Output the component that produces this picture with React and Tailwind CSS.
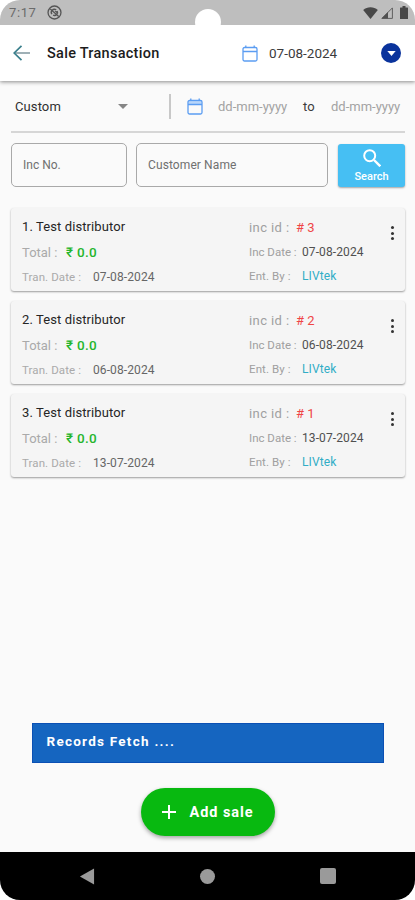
import { useState } from "react";

const sales = [
  { id: 3, name: "Test distributor", total: "0.0", tranDate: "07-08-2024", incDate: "07-08-2024", by: "LIVtek" },
  { id: 2, name: "Test distributor", total: "0.0", tranDate: "06-08-2024", incDate: "06-08-2024", by: "LIVtek" },
  { id: 1, name: "Test distributor", total: "0.0", tranDate: "13-07-2024", incDate: "13-07-2024", by: "LIVtek" },
];

function CalendarIcon({ className, band = "none" }) {
  return (
    <svg viewBox="0 0 16 17" className={className} fill="none" stroke="#5b9df2">
      <path d="M1.500 3.300h13v3.200h-13z" fill={band} stroke="none" />
      <rect x="1" y="2.500" width="14" height="13.500" rx="1.500" strokeWidth="1.300" />
      <path d="M1 6.500h14M3.800 0.500v2M12.200 0.500v2" strokeWidth="1.300" />
    </svg>
  );
}

function StatusBar() {
  return (
    <div className="relative z-10 flex h-[25px] shrink-0 items-center bg-[#bebebe] pl-[9px] pr-[7px]">
      <span className="w-[38px] text-[13px] tracking-[0.6px] text-[#6b6b6b]">7:17</span>
      <svg viewBox="0 0 16 16" className="h-[15px] w-[15px]" fill="none" stroke="#555">
        <circle cx="8" cy="8" r="6.900" strokeWidth="1.400" />
        <path d="M5.200 9.800A3.300 3.300 0 0 1 9.800 5.200M10.900 6.500A3.300 3.300 0 0 1 6.500 10.900" strokeWidth="1.500" />
        <path d="M3.500 4.200l9 8" strokeWidth="1.300" />
        <path d="M8 6.500h2.500v2.500z" fill="#555" stroke="none" />
      </svg>
      <div className="ml-auto flex items-center">
        <svg viewBox="0 0 15 12" className="h-3 w-[15px]" fill="#484848">
          <path d="M7.500 12 0.200 2.900C2.200 1.200 4.700.200 7.500.200s5.300 1 7.300 2.700z" />
        </svg>
        <svg viewBox="0 0 12 12" className="ml-[3px] h-3 w-3">
          <path d="M11.400.900v10.500H.900z" fill="none" stroke="#606060" />
          <path d="M7 5v6.500H.500z" fill="#505050" />
        </svg>
        <svg viewBox="0 0 8 13" className="ml-[7px] h-[13px] w-2" fill="#484848">
          <path d="M2.500 0h3v1.400H7.500q.500 0 .500.500V12.500q0 .500-.500.500h-7q-.500 0-.500-.500V1.900q0-.500.500-.500h2z" />
        </svg>
      </div>
      {/* camera cutout */}
      <div className="absolute left-[195px] top-[9px] h-[26px] w-[26px] rounded-full bg-white" />
    </div>
  );
}

function Header() {
  return (
    <header className="relative flex h-14 shrink-0 items-center bg-white pl-[13px] pr-[14px] shadow-[0_1px_4px_rgba(0,0,0,0.45)]">
      <svg viewBox="0 0 17 16" className="h-4 w-[17px]" fill="none" strokeWidth="1.700">
        <path d="M2 8h15" stroke="#7f969e" />
        <path d="M8.500.800 1.200 8l7.300 7.200" stroke="#3a7f8c" />
      </svg>
      <h1 className="ml-[17px] w-[195px] pt-[2px] text-[14.5px] font-medium tracking-[0.28px] text-[#1c1c1c]">Sale Transaction</h1>
      <CalendarIcon className="h-[17px] w-4" />
      <span className="ml-[11px] text-[13.5px] text-[#3c3c3c]">07-08-2024</span>
      <button className="ml-auto flex h-5 w-5 items-center justify-center rounded-full bg-[#0a339c]">
        <svg viewBox="0 0 10 6" className="mt-px h-[5px] w-[9px]" fill="#fff">
          <path d="M0 0h10L5 6z" />
        </svg>
      </button>
    </header>
  );
}

function Filters() {
  const [incNo, setIncNo] = useState("");
  const [customer, setCustomer] = useState("");

  return (
    <div className="pl-[11px] pr-[10px]">
      <div className="flex h-[52px] items-center border-b-2 border-[#d6d6d6] pl-1">
        <span className="w-[103px] pt-px text-[13px] tracking-[0.1px] text-[#303030]">Custom</span>
        <svg viewBox="0 0 10 5" className="h-[5px] w-[10px]" fill="#858585">
          <path d="M0 0h10L5 5z" />
        </svg>
        <div className="ml-[41px] h-[25px] w-[2px] bg-[#c8c8c8]" />
        <CalendarIcon className="ml-4 h-[17px] w-4" band="#b9d6fa" />
        <span className="ml-[15px] w-[85px] pt-px text-[13px] text-[#a3a3a3]">dd-mm-yyyy</span>
        <span className="w-[28px] pt-px text-[13px] text-[#3c3c3c]">to</span>
        <span className="pt-px text-[13px] text-[#a3a3a3]">dd-mm-yyyy</span>
      </div>
      <div className="mt-[10px] flex h-[44px] items-stretch">
        <input
          value={incNo}
          onChange={(e) => setIncNo(e.target.value)}
          placeholder="Inc No."
          className="w-[116px] rounded-[5px] border border-[#a9a9a9] pl-[11px] text-[12px] text-[#303030] placeholder:text-[#707070]"
        />
        <input
          value={customer}
          onChange={(e) => setCustomer(e.target.value)}
          placeholder="Customer Name"
          className="ml-[9px] w-[192px] rounded-[5px] border border-[#a9a9a9] pl-[11px] text-[12px] tracking-[0.1px] text-[#303030] placeholder:text-[#707070]"
        />
        <button className="ml-[10px] mt-px flex w-[67px] flex-col items-center rounded-[3px] bg-[#46bff3] text-white shadow-[0_1px_2px_rgba(0,0,0,0.35)]">
          <svg viewBox="0 0 18 18" className="mt-[5px] h-[18px] w-[18px]" fill="none" stroke="#fff">
            <circle cx="6.700" cy="6.700" r="5.500" strokeWidth="2" />
            <path d="m11 11 6.300 6.300" strokeWidth="2.400" />
          </svg>
          <span className="mt-[2px] text-[11px] font-medium leading-[16px]">Search</span>
        </button>
      </div>
    </div>
  );
}

function SaleCard({ index, sale }) {
  return (
    <div className="flex h-[83px] rounded-[3px] bg-[#f5f5f5] pl-[11px] pt-[7px] shadow-[0_1px_2px_rgba(0,0,0,0.38)]">
      <div className="w-[227px] text-[#aaaaaa]">
        <p className="text-[13px] leading-[24px] tracking-[0.1px] text-[#252525]">{index}. {sale.name}</p>
        <p className="flex text-[13px] leading-[27px]">
          <span className="w-[44px]">Total :</span>
          <span className="text-[13.5px] font-medium tracking-[0.3px] text-[#25b52d]">₹ {sale.total}</span>
        </p>
        <p className="flex text-[12px] leading-[22px]">
          <span className="w-[71px] tracking-[0.1px] text-[11.5px]">Tran. Date :</span>
          <span className="tracking-[0.1px] text-[#666666]">{sale.tranDate}</span>
        </p>
      </div>
      <div className="w-[139px] text-[#a0a0a0]">
        <p className="flex text-[13px] leading-[25px]">
          <span className="w-[47px] tracking-[0.4px]">inc id :</span>
          <span className="text-[#ef4545]"># {sale.id}</span>
        </p>
        <p className="flex text-[12px] leading-[25px]">
          <span className="w-[53px] text-[11.5px]">Inc Date :</span>
          <span className="tracking-[0.1px] text-[#505050]">{sale.incDate}</span>
        </p>
        <p className="flex text-[12px] leading-[23px]">
          <span className="w-[53px] tracking-[0.1px] text-[11.5px]">Ent. By :</span>
          <span className="tracking-[0.1px] text-[#31adc6]">{sale.by}</span>
        </p>
      </div>
      <button className="mt-[11px] flex h-[14px] w-[9px] flex-col items-center justify-between">
        <span className="h-[3px] w-[3px] rounded-full bg-[#333]" />
        <span className="h-[3px] w-[3px] rounded-full bg-[#333]" />
        <span className="h-[3px] w-[3px] rounded-full bg-[#333]" />
      </button>
    </div>
  );
}

function NavBar() {
  return (
    <nav className="flex h-12 shrink-0 items-center justify-between bg-black pl-[79px] pr-[79px]">
      <svg viewBox="0 0 16 18" className="h-[17px] w-4" fill="#9a9a9a">
        <path d="M15.500.500v17L.500 9z" />
      </svg>
      <div className="h-[15px] w-[15px] rounded-full bg-[#9a9a9a]" />
      <div className="h-4 w-4 rounded-[2px] bg-[#9a9a9a]" />
    </nav>
  );
}

export default function App() {
  return (
    <div className="bg-white">
      <div className="flex h-[900px] w-[415px] flex-col overflow-hidden rounded-[20px] bg-[#fafafa] font-['Roboto',sans-serif]">
        <StatusBar />
        <Header />
        <Filters />
        <div className="mx-[11px] mt-[21px] flex w-[394px] flex-col gap-[10px]">
          {sales.map((sale, i) => (
            <SaleCard key={sale.id} index={i + 1} sale={sale} />
          ))}
        </div>
        <div className="mt-auto flex flex-col items-center pb-4">
          <div className="h-10 w-[352px] border border-[#0b50b4] bg-[#1565c0] pl-[14px] text-[13.5px] font-bold leading-[35px] tracking-[1.25px] text-white">
            Records Fetch ....
          </div>
          <button className="mt-[25px] flex h-12 w-[134px] items-center rounded-full bg-[#08b910] pl-[21px] text-white shadow-[0_2px_4px_rgba(0,0,0,0.35)]">
            <svg viewBox="0 0 14 14" className="h-[14px] w-[14px]" stroke="#fff" strokeWidth="2">
              <path d="M7 0v14M0 7h14" />
            </svg>
            <span className="ml-[14px] pt-[2px] text-[14.5px] font-bold tracking-[0.95px]">Add sale</span>
          </button>
        </div>
        <NavBar />
      </div>
    </div>
  );
}
